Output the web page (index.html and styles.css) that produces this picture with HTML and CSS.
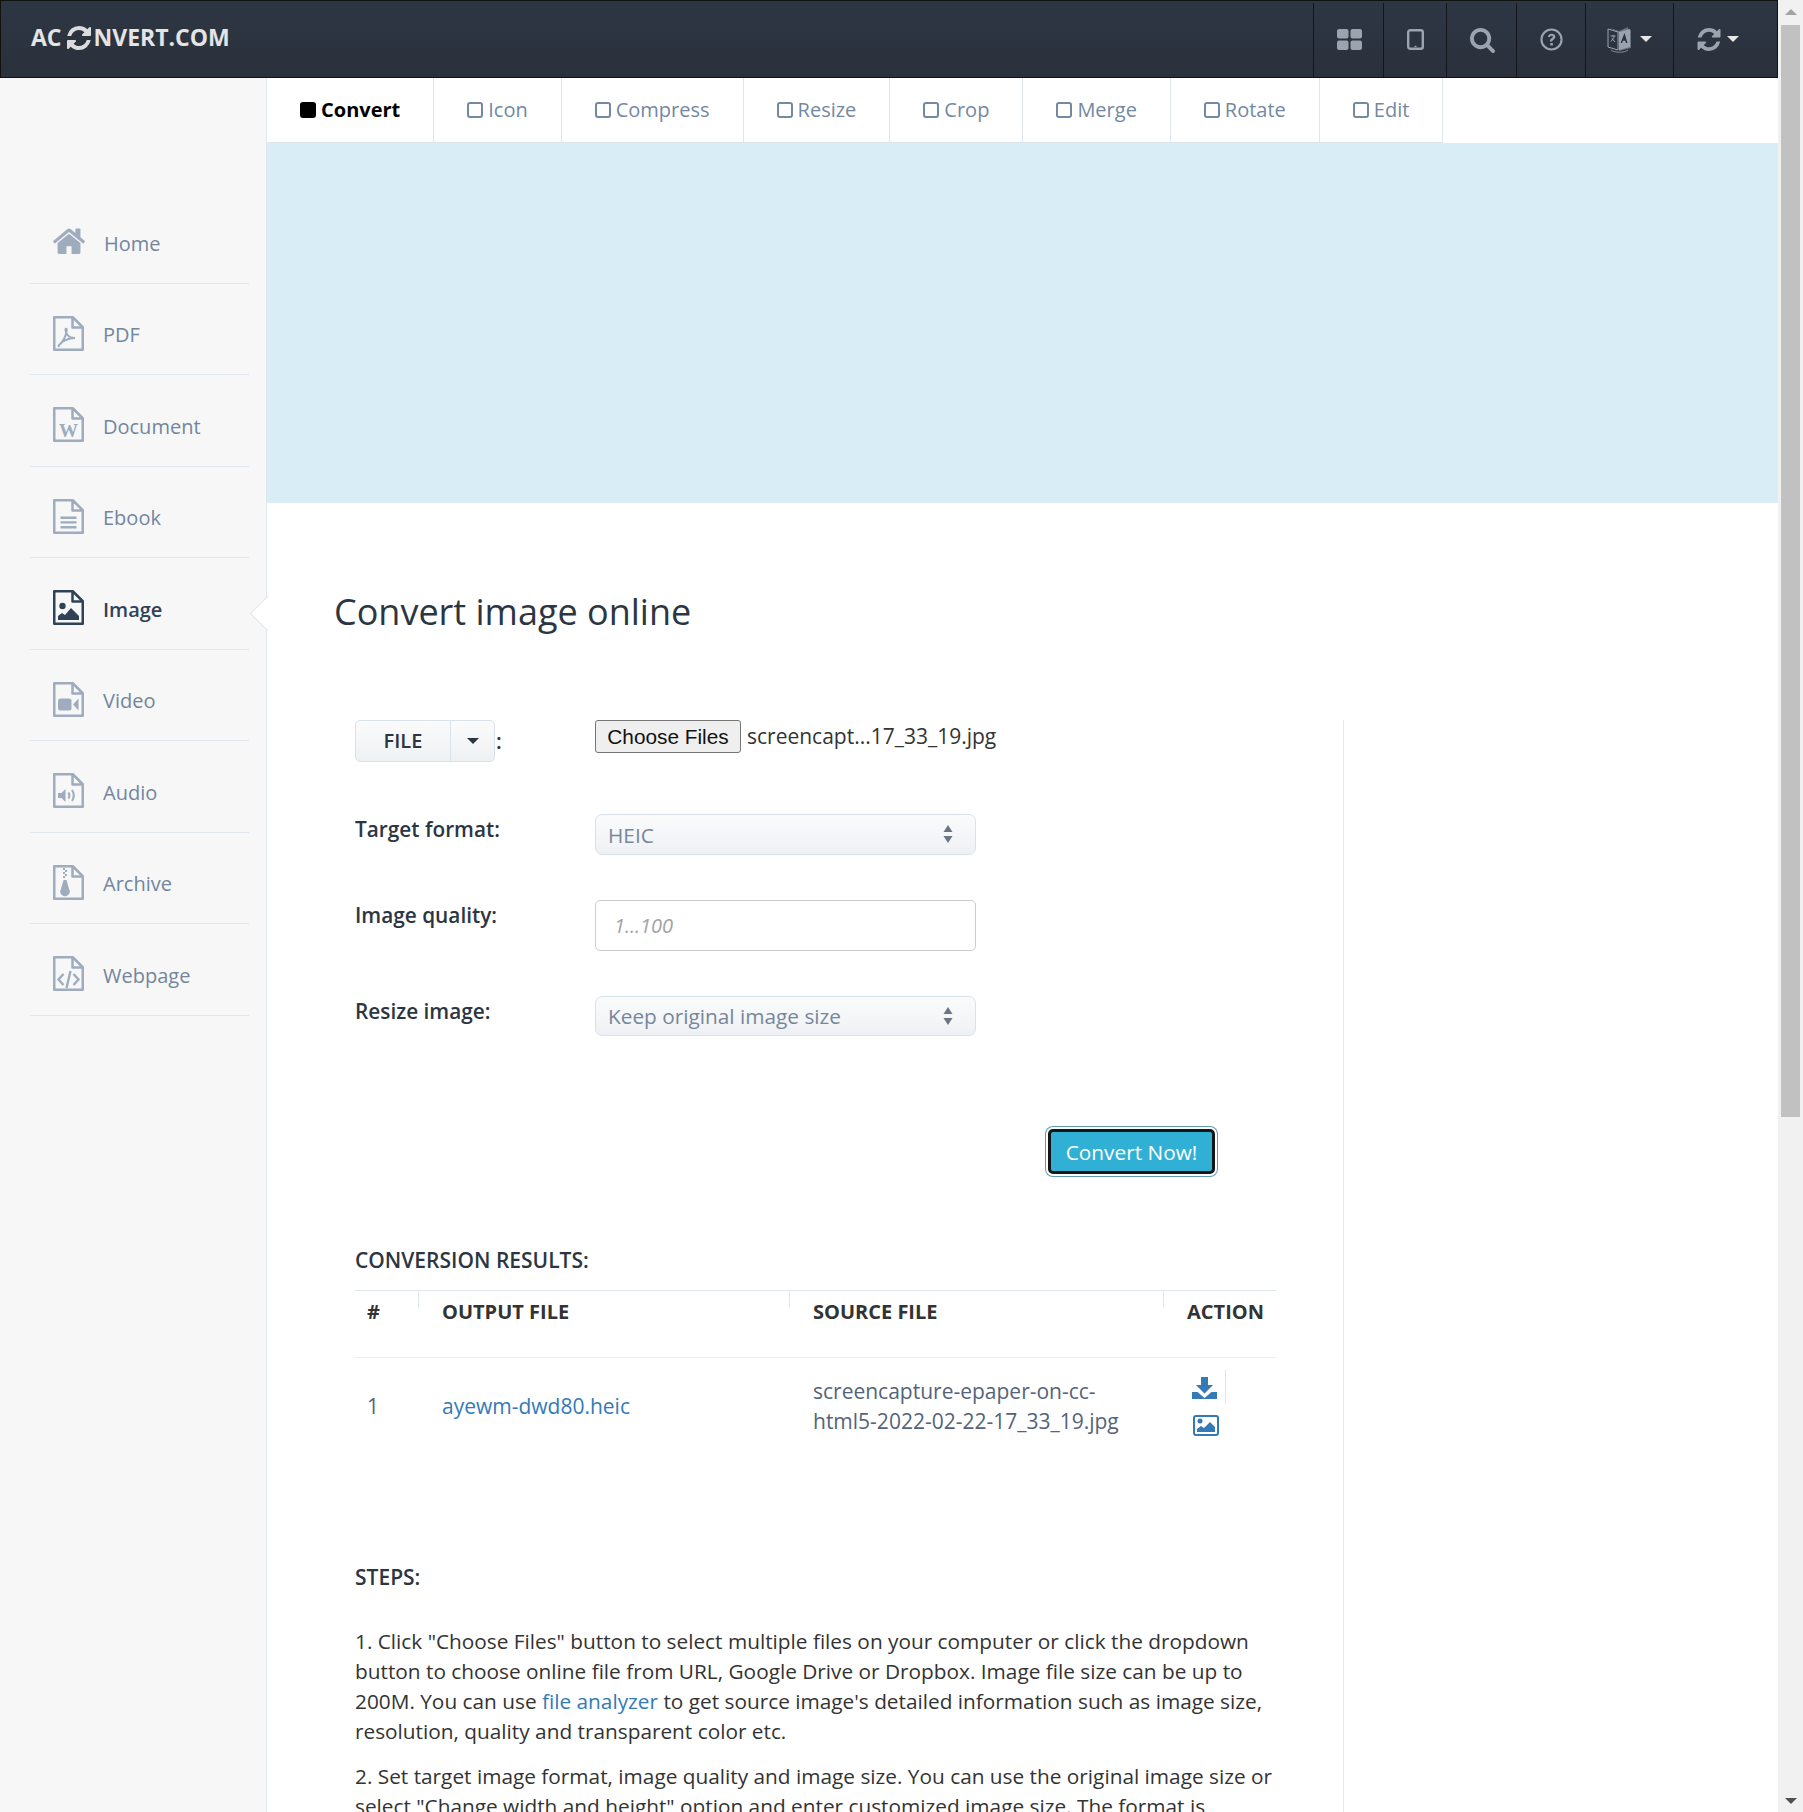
FILE: index.html
```html
<!DOCTYPE html>
<html lang="en">
<head>
<meta charset="utf-8">
<title>Convert image online</title>
<link rel="stylesheet" href="styles.css">
</head>
<body>
<div class="window">
  <div class="page">
    <header class="topbar">
      <a class="logo">AC<svg class="logo-icon" viewBox="128 128 1536 1536"><use href="#i-refresh" width="1792" height="1792"/></svg>NVERT.COM</a>
      <nav class="tools">
        <a class="tool t1"><svg class="i-grid" viewBox="0 0 25 21"><rect width="11.500" height="9.500" rx="2"/><rect x="13.500" width="11.500" height="9.500" rx="2"/><rect y="11.500" width="11.500" height="9.500" rx="2"/><rect x="13.500" y="11.500" width="11.500" height="9.500" rx="2"/></svg></a>
        <a class="tool t2"><svg class="i-tablet" viewBox="0 0 17 21"><rect x="1.200" y="1.200" width="14.600" height="18.600" rx="2" fill="none" stroke="currentColor" stroke-width="2.400"/><rect x="7.500" y="16.800" width="2" height="1.500"/></svg></a>
        <a class="tool t3"><svg class="i-search" viewBox="64 128 1664 1664"><path d="M1216 832q0-185-131.500-316.500t-316.500-131.500-316.500 131.500-131.500 316.500 131.500 316.500 316.500 131.500 316.500-131.500 131.500-316.500zm512 832q0 52-38 90t-90 38q-54 0-90-38l-343-342q-179 124-399 124-143 0-273.500-55.500t-225-150-150-225-55.500-273.500 55.500-273.500 150-225 225-150 273.500-55.500 273.500 55.500 225 150 150 225 55.500 273.500q0 220-124 399l343 343q37 37 37 90z"/></svg></a>
        <a class="tool t4"><svg class="i-help" viewBox="0 0 24 24"><circle cx="12" cy="12" r="10.500" fill="none" stroke="currentColor" stroke-width="2.200"/><path d="M8.300 9.400c.3-2.200 1.800-3.400 3.900-3.400 2.200 0 3.800 1.300 3.800 3.200 0 1.500-.8 2.300-1.900 3-1 .6-1.300 1-1.300 2h-2.500c0-1.800.5-2.600 1.800-3.400.9-.6 1.300-1 1.300-1.600 0-.7-.6-1.200-1.300-1.200-.9 0-1.300.5-1.500 1.500zM10.800 15.700h2.600v2.500h-2.600z"/></svg></a>
        <a class="tool t5"><svg class="i-lang" viewBox="0 0 25 27"><path d="M1 3l10 3v18l-10-3z" fill="none" stroke="currentColor" stroke-width="1"/><path d="M3 2l9 3 9-4v2l3 1v18l-12 3V7z" opacity=".55"/><path d="M12 6l11-3v18l-11 3z"/><path d="M3.500 10h5M6 9v1.500M7.500 10.500l-3.500 5M5 12.500l3 3.500" fill="none" stroke="currentColor" stroke-width="1"/><path class="lang-a" d="M17.500 7l3 10h-1.600l-.6-2.200h-2.500l-.6 2.200h-1.600z"/><path d="M4 24c4 3 13 3 17 0" fill="none" stroke="currentColor" stroke-width=".8"/></svg><span class="caret caret-light"></span></a>
        <a class="tool t6"><svg class="i-sync" viewBox="128 128 1536 1536"><use href="#i-refresh" width="1792" height="1792"/></svg><span class="caret caret-light"></span></a>
      </nav>
    </header>

    <div class="layout">
      <aside class="sidebar">
        <ul class="menu">
          <li class="menu-item"><svg class="mi home" viewBox="96 128 1600 1408"><path d="M1472 992v480q0 26-19 45t-45 19h-384v-384h-256v384h-384q-26 0-45-19t-19-45v-480q0-1 .5-3t.5-3l575-474 575 474q1 2 1 6zm223-69l-62 74q-8 9-21 11h-3q-13 0-21-7l-692-577-692 577q-12 8-24 7-13-2-21-11l-62-74q-8-10-7-23.500t11-21.500l719-599q32-26 76-26t76 26l244 204v-195q0-14 9-23t23-9h192q14 0 23 9t9 23v408l219 182q10 8 11 21.500t-7 23.500z"/></svg><span>Home</span></li>
          <li class="menu-item"><svg class="mi" viewBox="0 0 31 35"><use href="#i-file"/><path d="M6 29c3-2 6-7 7.500-13 .5-2.500.3-3.500-.6-3.200-.9.300-.5 3.200 1.600 6.200 1.500 2 3.500 3 7 3M6 29c-1 .8-.5 1.500.6.800M22 22c-4 0-9 1.500-13 4" fill="none" stroke="currentColor" stroke-width="2"/></svg><span>PDF</span></li>
          <li class="menu-item"><svg class="mi" viewBox="0 0 31 35"><use href="#i-file"/><text class="mi-w" x="15.500" y="30" text-anchor="middle">W</text></svg><span>Document</span></li>
          <li class="menu-item"><svg class="mi" viewBox="0 0 31 35"><use href="#i-file"/><path d="M7.500 17.500h16v2.400h-16zM7.500 22.200h16v2.400h-16zM7.500 27h16v2.400h-16z"/></svg><span>Ebook</span></li>
          <li class="menu-item active"><svg class="mi" viewBox="0 0 31 35"><use href="#i-file"/><circle cx="9.500" cy="16" r="3.200"/><path d="M5 30v-4l4-3 3 2 6-7 8 8v4z"/></svg><span>Image</span></li>
          <li class="menu-item"><svg class="mi" viewBox="0 0 31 35"><use href="#i-file"/><rect x="5" y="16.500" width="13.500" height="12" rx="2.500"/><path d="M20 22.500l5.500-6v12z"/></svg><span>Video</span></li>
          <li class="menu-item"><svg class="mi" viewBox="0 0 31 35"><use href="#i-file"/><path d="M5 20h3.500l4-4v13l-4-4H5z"/><path d="M15.500 19.500c1 1.800 1 4.200 0 6M19 17c2.200 3.400 2.200 7.600 0 11" fill="none" stroke="currentColor" stroke-width="2"/></svg><span>Audio</span></li>
          <li class="menu-item"><svg class="mi" viewBox="0 0 31 35"><use href="#i-file"/><path d="M10 3h2v2h-2zM12 5h2v2h-2zM10 7h2v2h-2zM12 9h2v2h-2zM10 11h2v2h-2zM10.500 15h3l2.500 9a4.700 4.700 0 1 1-8 0z"/></svg><span>Archive</span></li>
          <li class="menu-item"><svg class="mi" viewBox="0 0 31 35"><use href="#i-file"/><path d="M10.500 18l-5 5.500 5 5.500M20.500 18l5 5.500-5 5.500M17.500 15l-4 17" fill="none" stroke="currentColor" stroke-width="2.400"/></svg><span>Webpage</span></li>
        </ul>
      </aside>

      <main class="content">
        <nav class="tabs">
          <a class="tab on"><i class="box"></i>Convert</a>
          <a class="tab"><i class="box"></i>Icon</a>
          <a class="tab"><i class="box"></i>Compress</a>
          <a class="tab"><i class="box"></i>Resize</a>
          <a class="tab"><i class="box"></i>Crop</a>
          <a class="tab"><i class="box"></i>Merge</a>
          <a class="tab"><i class="box"></i>Rotate</a>
          <a class="tab"><i class="box"></i>Edit</a>
        </nav>
        <div class="banner"></div>

        <h1 class="title">Convert image online</h1>

        <section class="column">
          <form class="form">
            <div class="row row-file">
              <div class="label-file"><span class="btn-group"><span class="btn-file">FILE</span><span class="btn-drop"><span class="caret caret-dark"></span></span></span><b class="colon">:</b></div>
              <div class="file-field"><button type="button" class="choose">Choose Files</button><span class="file-name">screencapt...17_33_19.jpg</span></div>
            </div>
            <div class="row row-format">
              <label class="label">Target format:</label>
              <div class="select"><select class="sel"><option>HEIC</option></select><svg class="updown" viewBox="0 0 10 18"><path d="M5 0l4.500 7h-9zM5 18L.5 11h9z"/></svg></div>
            </div>
            <div class="row row-quality">
              <label class="label">Image quality:</label>
              <input class="text-input" type="text" placeholder="1...100">
            </div>
            <div class="row row-resize">
              <label class="label">Resize image:</label>
              <div class="select"><select class="sel"><option>Keep original image size</option></select><svg class="updown" viewBox="0 0 10 18"><path d="M5 0l4.500 7h-9zM5 18L.5 11h9z"/></svg></div>
            </div>
            <div class="submit"><button type="button" class="convert">Convert Now!</button></div>
          </form>

          <h3 class="subhead results-head">CONVERSION RESULTS:</h3>
          <table class="results">
            <colgroup><col class="c1"><col class="c2"><col class="c3"><col class="c4"></colgroup>
            <thead>
              <tr><th>#</th><th>OUTPUT FILE</th><th>SOURCE FILE</th><th>ACTION</th></tr>
            </thead>
            <tbody>
              <tr>
                <td>1</td>
                <td><a class="link">ayewm-dwd80.heic</a></td>
                <td>screencapture-epaper-on-cc-html5-2022-02-22-17_33_19.jpg</td>
                <td>
                  <div class="actions">
                    <svg class="a-down" viewBox="0 0 25 22"><path d="M9 0h7v8h5l-8.500 8.500L4 8h5z"/><path d="M0 15h5.500l7 6 7-6H25v7H0z"/></svg>
                    <svg class="a-image" viewBox="0 0 26 21"><rect x="1" y="1" width="24" height="19" rx="2" fill="none" stroke="currentColor" stroke-width="2"/><circle cx="7" cy="6" r="2.500"/><path d="M4 17v-3l4-3 3 2 6-6 5 5v5z"/></svg>
                  </div>
                </td>
              </tr>
            </tbody>
          </table>

          <h3 class="subhead steps-head">STEPS:</h3>
          <p class="step">1. Click "Choose Files" button to select multiple files on your computer or click the dropdown button to choose online file from URL, Google Drive or Dropbox. Image file size can be up to 200M. You can use <a class="link">file analyzer</a> to get source image's detailed information such as image size, resolution, quality and transparent color etc.</p>
          <p class="step">2. Set target image format, image quality and image size. You can use the original image size or select "Change width and height" option and enter customized image size. The format is</p>
        </section>
      </main>
    </div>
  </div>

  <div class="scrollbar">
    <span class="arrow up"></span>
    <span class="thumb"></span>
    <span class="arrow down"></span>
  </div>
</div>

<svg class="defs" aria-hidden="true">
  <symbol id="i-refresh" viewBox="0 0 1792 1792"><path fill="currentColor" d="M1639 1056q0 5-1 7-64 268-268 434.500t-478 166.500q-146 0-282.500-55t-243.500-157l-129 129q-19 19-45 19t-45-19-19-45v-448q0-26 19-45t45-19h448q26 0 45 19t19 45-19 45l-137 137q71 66 161 102t187 36q134 0 250-65t186-179q11-17 53-117 8-23 30-23h192q13 0 22.500 9.500t9.500 22.500zm25-800v448q0 26-19 45t-45 19h-448q-26 0-45-19t-19-45 19-45l138-138q-148-137-349-137-134 0-250 65t-186 179q-11 17-53 117-8 23-30 23h-199q-13 0-22.500-9.500t-9.500-22.500v-7q65-268 270-434.500t480-166.500q146 0 284 55.500t245 156.500l130-129q19-19 45-19t45 19 19 45z"/></symbol>
  <symbol id="i-file" viewBox="0 0 31 35"><path fill="none" stroke="currentColor" stroke-width="2.500" stroke-linejoin="round" d="M1.250 1.250h18.500l10 10v22.500H1.250zM19.500 1.250v10.250h10.250"/></symbol>
</svg>
</body>
</html>
```
FILE: styles.css
```css
* { box-sizing: border-box; }
html, body { margin: 0; height: 1812px; overflow: hidden; }
body { font: 20.800px/30px "Open Sans", "Noto Sans", sans-serif; color: #333; background: #fff; }
a { text-decoration: none; }
svg { fill: currentColor; display: block; flex: none; }
.defs { width: 0; height: 0; position: absolute; }

.window { display: flex; height: 1812px; overflow: hidden; }
.page { width: 1778px; flex: none; display: flex; flex-direction: column; }

/* scrollbar */
.scrollbar { flex: 1; background: #f1f1f1; display: flex; flex-direction: column; align-items: center; padding: 0 3px; }
.thumb { align-self: stretch; height: 1092px; background: #c1c1c1; }
.arrow { height: 25px; width: 100%; flex: none; position: relative; }
.arrow::after { content: ""; position: absolute; left: 50%; top: 9px; margin-left: -6px; border: 6px solid transparent; border-top: 0; border-bottom: 6px solid #a3a3a3; }
.arrow.down { margin-top: auto; }
.arrow.down::after { border-bottom: 0; border-top: 6px solid #505050; top: 11px; }

/* top bar */
.topbar { height: 78px; flex: none; display: flex; justify-content: space-between; background: linear-gradient(#2d3743, #2a303c); border: 1px solid #111; padding-left: 30px; }
.logo { display: flex; align-items: center; font-size: 23px; font-weight: 700; color: #e4e4e4; height: 72px; }
.logo-icon { width: 26px; height: 24px; margin: 1px 2px 0 4px; color: #dcdcdc; }
.tools { display: flex; padding-top: 2px; }
.tool { border-left: 1px solid #12161c; display: flex; align-items: center; justify-content: center; color: #9aa3ae; padding-bottom: 2px; }
.t1 { width: 70px; padding-left: 2px; } .t2 { width: 63px; } .t3 { width: 70px; padding-left: 1px; } .t4 { width: 69px; } .t5 { width: 88px; } .t6 { width: 104px; padding-right: 16px; }
.i-grid { width: 25px; height: 21px; }
.i-tablet { width: 17px; height: 21px; }
.i-search { width: 25px; height: 25px; margin-top: 2px; }
.i-help { width: 23px; height: 23px; }
.i-lang { width: 25px; height: 27px; }
.lang-a { fill: #2b3340; }
.i-sync { width: 24px; height: 23px; }
.caret { display: inline-block; width: 0; height: 0; border-left: 6px solid transparent; border-right: 6px solid transparent; border-top: 6px solid currentColor; }
.caret-light { color: #e6e6e6; margin-left: 8px; }
.t6 .caret-light { margin-left: 6px; }
.caret-dark { color: #2c3643; }

/* layout */
.layout { flex: 1; display: flex; min-height: 0; }
.sidebar { width: 267px; flex: none; background: #f7f7f7; border-right: 1px solid #dfe6ee; padding: 114px 17px 0 30px; }
.menu { list-style: none; margin: 0; padding: 0; }
.menu-item { height: 91.500px; border-bottom: 1px solid #dfe6ee; display: flex; align-items: center; padding: 13px 0 0 23px; gap: 19px; color: #72869f; position: relative; font-size: 20px; }
.menu-item svg.mi { width: 31px; height: 35px; color: #9eacbe; margin-top: -4px; }
.menu-item svg.home { width: 32px; height: 28px; margin-top: -8px; }
.menu-item.active { color: #2f4257; font-weight: 600; }
.menu-item.active svg.mi { color: #2f4257; }
.menu-item.active::after { content: ""; position: absolute; right: -31px; top: 43px; width: 24px; height: 24px; transform: rotate(45deg); background: #fff; border-left: 1px solid #dfe6ee; border-bottom: 1px solid #dfe6ee; }
.mi-w { font: 700 19px "Liberation Serif", serif; }

/* main */
.content { flex: 1; min-width: 0; display: flex; flex-direction: column; overflow: hidden; }
.tabs { height: 65px; flex: none; display: flex; background: #fff; font-size: 20px; }
.tab { display: flex; align-items: center; padding: 0 33px; color: #7388a3; border-right: 1px solid #dfe6ee; border-bottom: 1px solid #dfe6ee; gap: 5px; }
.tab .box { width: 16px; height: 16px; border: 2px solid currentColor; border-radius: 3px; background: #fff; }
.tab.on { color: #000; font-weight: 700; }
.tab.on .box { background: #000; border-color: #000; }
.banner { height: 360px; flex: none; background: #d9edf7; }
.title { font-size: 36px; line-height: 50px; font-weight: 400; color: #2c3643; margin: 84px 0 0 67px; }

.column { width: 1077px; flex: 1; border-right: 1px solid #e8e8e8; margin-top: 83px; padding: 0 66px 0 88px; }

/* form */
.form { display: block; }
.row { display: flex; }
.label, .label-file { width: 240px; flex: none; font-weight: 600; color: #2c3643; }
.row-file { height: 42px; }
.btn-group { display: inline-flex; height: 42px; width: 140px; border: 1px solid #d8e2ec; border-radius: 5px; background: linear-gradient(#fbfbfb, #eef1f4); color: #2c3643; font-weight: 600; font-size: 20px; }
.label-file { display: flex; align-items: center; }
.colon { margin-left: 1px; font-weight: 600; }
.btn-file { width: 95px; display: flex; align-items: center; justify-content: center; border-right: 1px solid #d8e2ec; }
.btn-drop { flex: 1; display: flex; align-items: center; justify-content: center; }
.file-field { display: flex; align-items: flex-start; gap: 6px; }
.choose { width: 146px; height: 33px; padding: 0; font: 20.800px "Liberation Sans", sans-serif; color: #111; background: #efefef; border: 1px solid #767676; border-radius: 3px; }
.file-name { line-height: 33px; color: #333; font-size: 21px; }
.row-format { margin-top: 52px; }
.row-quality { margin-top: 45px; }
.row-resize { margin-top: 45px; }
.row .label { line-height: 31px; }
.select { position: relative; width: 381px; height: 41px; }
.row-resize .select { height: 40px; }
.sel { appearance: none; -webkit-appearance: none; display: block; width: 100%; height: 100%; padding: 0 12px; font: 20.800px "Open Sans", sans-serif; color: #77879b; border: 1px solid #d8e2ec; border-radius: 7px; background: linear-gradient(#fbfbfb, #eef1f4); }
.updown { position: absolute; right: 23px; top: 11px; width: 10px; height: 18px; color: #6c7683; pointer-events: none; }
.text-input { width: 381px; height: 51px; padding: 0 18px; font: italic 20px "Open Sans", sans-serif; border: 1px solid #ccc; border-radius: 5px; }
.text-input::placeholder { color: #a3a3a3; opacity: 1; }
.submit { display: flex; justify-content: flex-end; margin-top: 93px; padding-right: 62px; }
.convert { width: 167px; height: 45px; padding: 0; font: 20.800px "Open Sans", sans-serif; color: #fff; background: #31b0d5; border: 3px solid #161616; border-radius: 5px; box-shadow: 0 0 0 2px #fff, 0 0 0 3px #5f9db5; }

/* results */
.subhead { font-size: 21px; line-height: 30px; font-weight: 600; color: #2c3643; margin: 0; }
.results-head { margin-top: 71px; }
.results { border-collapse: collapse; table-layout: fixed; width: 921px; margin-top: 15px; }
.c1 { width: 64px; } .c2 { width: 371px; } .c3 { width: 374px; } .c4 { width: 112px; }
.results th { height: 67px; padding: 6px 0 0 23px; vertical-align: top; text-align: left; font-weight: 700; font-size: 20px; color: #333; border-top: 1px solid #dfe6ee; border-bottom: 1px solid #eaeef2; position: relative; }
.results th:first-child, .results td:first-child { padding-left: 12px; }
.results td { padding: 18px 23px; color: #53647a; vertical-align: middle; font-size: 21px; }
.results th:not(:last-child)::after { content: ""; position: absolute; right: 0; top: 0; width: 1px; height: 16px; background: #dfe6ee; }
.results td:last-child { padding: 12px 0 0 24px; vertical-align: top; }
.link { color: #337ab7; }
.actions { display: flex; flex-direction: column; color: #337ab7; width: 38px; height: 34px; padding-left: 4px; border-right: 1px solid #dfe6ee; }
.a-down { width: 25px; height: 22px; margin-top: 7px; }
.a-image { width: 26px; height: 21px; margin: 16px 0 0 1px; flex: none; }
.steps-head { margin-top: 108px; }
.step { margin: 15px 0 0; color: #333; }
.steps-head + .step { margin-top: 34px; }
```
